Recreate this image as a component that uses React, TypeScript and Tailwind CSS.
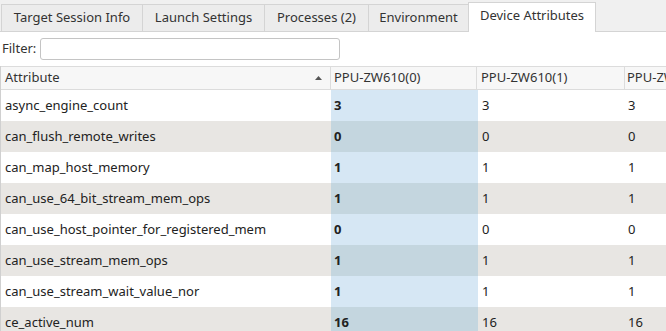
import React from 'react';

const TABS = [
  { label: 'Target Session Info', w: 'w-[142px]' },
  { label: 'Launch Settings', w: 'w-[123px]' },
  { label: 'Processes (2)', w: 'w-[105px]' },
  { label: 'Environment', w: 'w-[101px]' },
];

const ROWS: [string, string][] = [
  ['async_engine_count', '3'],
  ['can_flush_remote_writes', '0'],
  ['can_map_host_memory', '1'],
  ['can_use_64_bit_stream_mem_ops', '1'],
  ['can_use_host_pointer_for_registered_mem', '0'],
  ['can_use_stream_mem_ops', '1'],
  ['can_use_stream_wait_value_nor', '1'],
  ['ce_active_num', '16'],
];

export default function App() {
  return (
    <div className="w-[666px] h-[331px] overflow-hidden bg-white text-[13px] text-[#222] font-['Noto_Sans','Open_Sans',sans-serif]">
      {/* tab strip */}
      <div className="flex items-end h-[32px] bg-[#f0f0f0] border-b border-[#d4d4d4] pl-[1px]">
        {TABS.map((t) => (
          <div
            key={t.label}
            className={`${t.w} h-[27px] flex items-center justify-center bg-[#ececec] border border-b-0 border-[#d4d4d4] -ml-px first:ml-0 text-[#333]`}
          >
            {t.label}
          </div>
        ))}
        <div className="w-[128px] h-[30px] -mb-px flex items-center justify-center bg-white border border-b-0 border-[#d4d4d4] -ml-px text-[#333] pb-[3px]">
          Device Attributes
        </div>
      </div>

      {/* filter */}
      <div className="flex items-center h-[34px] pl-[2px] pb-[1px]">
        <span className="text-[#333]">Filter:</span>
        <div className="ml-[4px] w-[300px] h-[22px] border border-[#c4c4c4] rounded-[3px] bg-white" />
      </div>

      {/* table */}
      <div className="border-l border-[#d0d0d0]">
        <div className="flex h-[24px] bg-[#f7f7f7] border-y border-[#dcdcdc] text-[#333]">
          <div className="w-[330px] flex items-center justify-between pl-[4px] pr-[8px] border-r border-[#dcdcdc]">
            <span>Attribute</span>
            <svg width="7" height="4" viewBox="0 0 7 4"><path d="M0 4 L3.5 0 L7 4 Z" fill="#555" /></svg>
          </div>
          <div className="w-[146px] flex items-center pl-[3px] border-r border-[#dcdcdc]">PPU-ZW610(0)</div>
          <div className="w-[148px] flex items-center pl-[4px] border-r border-[#dcdcdc]">PPU-ZW610(1)</div>
          <div className="flex-1 flex items-center pl-[2px] whitespace-nowrap overflow-hidden">PPU-ZW610(2)</div>
        </div>
        {ROWS.map(([name, v], i) => {
          const odd = i % 2 === 1;
          return (
            <div key={name} className={`flex h-[31px] ${odd ? 'bg-[#e8e6e3]' : 'bg-white'}`}>
              <div className="w-[330px] flex items-center pl-[4px]">{name}</div>
              <div className={`w-[147px] flex items-center pl-[3px] font-bold ${odd ? 'bg-[#c4d6df]' : 'bg-[#d6e7f4]'}`}>{v}</div>
              <div className="w-[148px] flex items-center pl-[4px]">{v}</div>
              <div className="flex-1 flex items-center pl-[2px]">{v}</div>
            </div>
          );
        })}
      </div>
    </div>
  );
}
